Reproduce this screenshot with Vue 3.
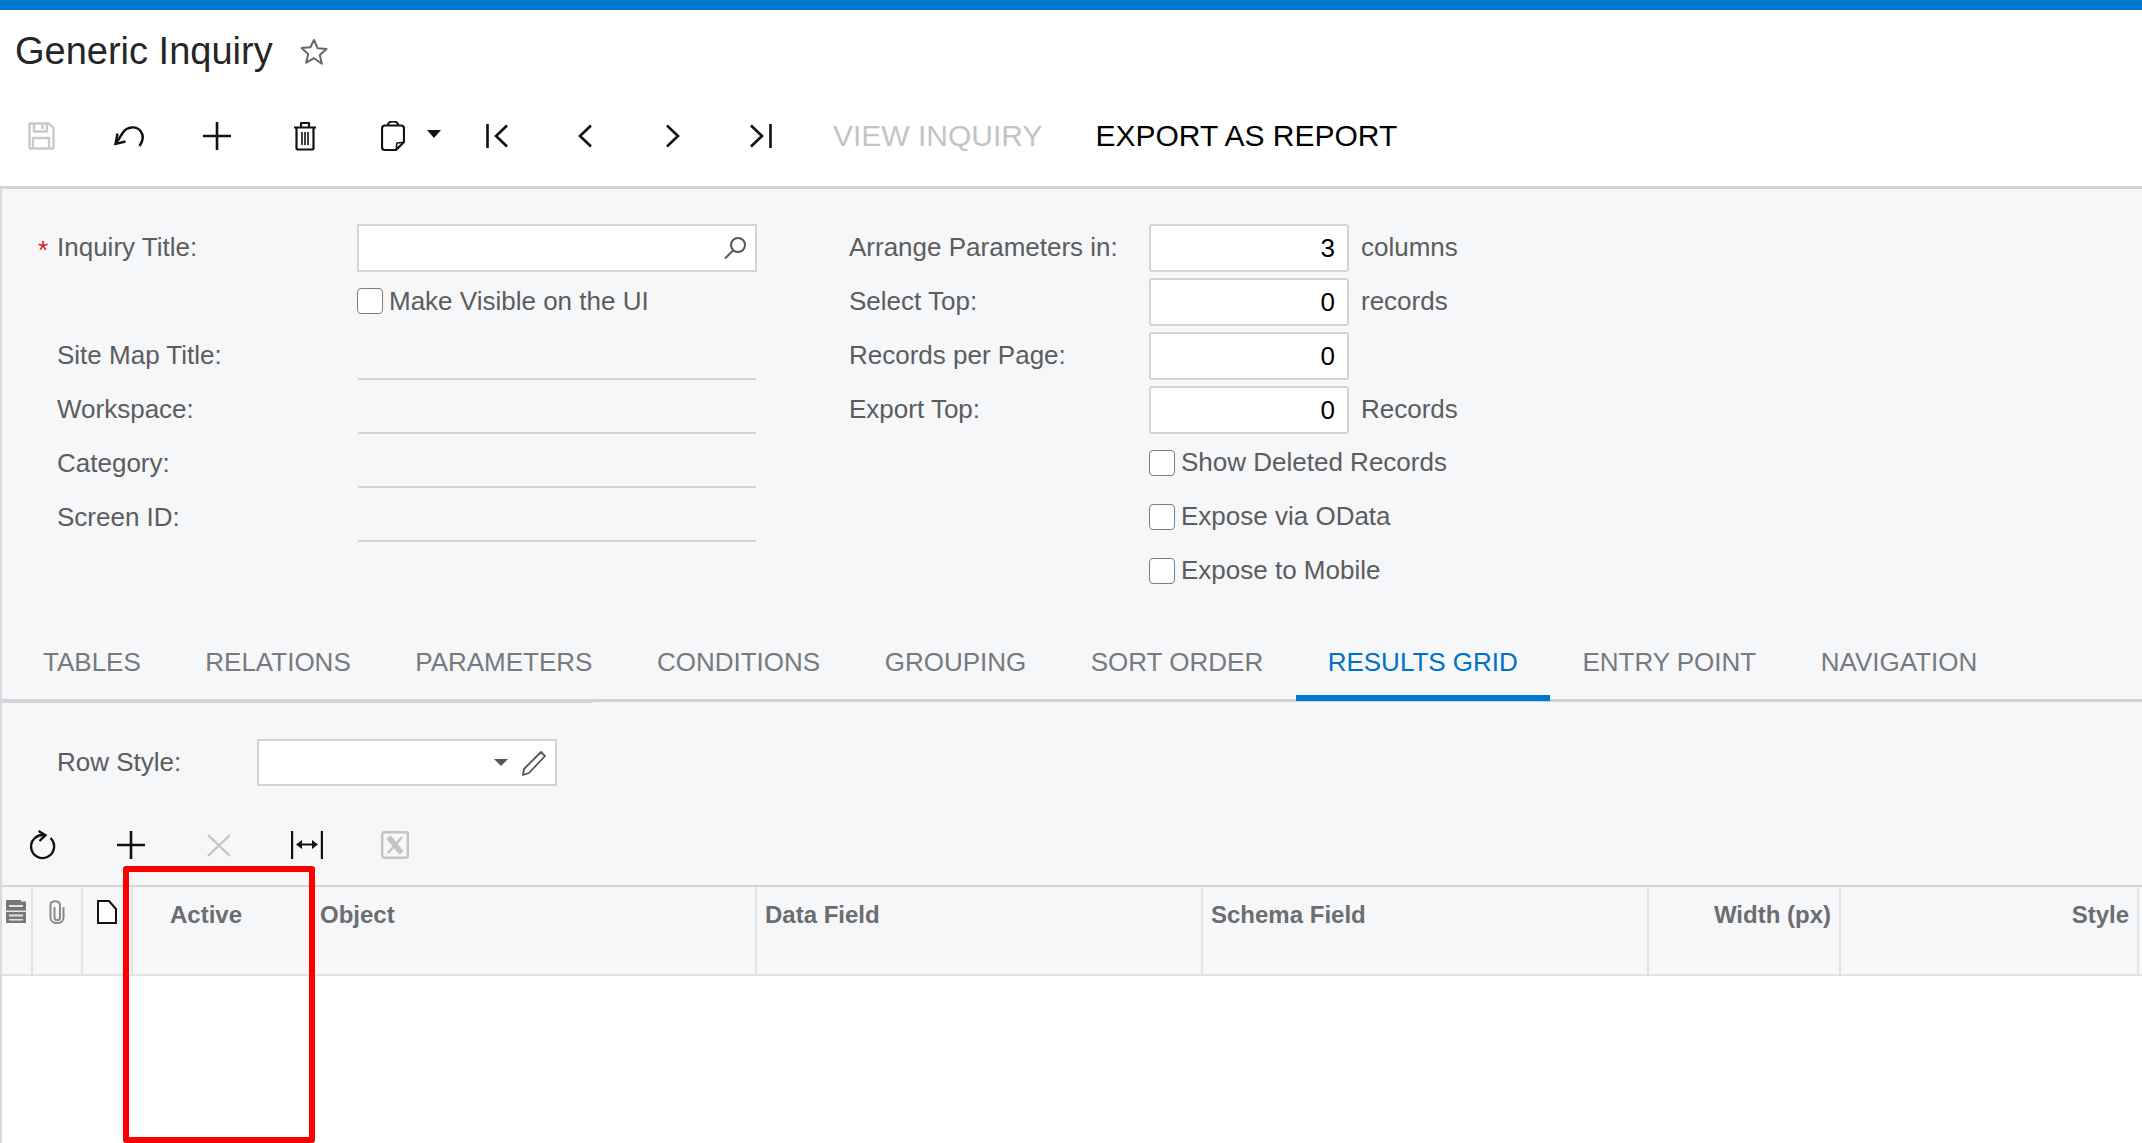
<script setup>
const tabs = ['TABLES','RELATIONS','PARAMETERS','CONDITIONS','GROUPING','SORT ORDER','RESULTS GRID','ENTRY POINT','NAVIGATION']
const lined = ['Site Map Title:','Workspace:','Category:','Screen ID:']
const numbers = [
  { label: 'Arrange Parameters in:', value: 3, suffix: 'columns' },
  { label: 'Select Top:', value: 0, suffix: 'records' },
  { label: 'Records per Page:', value: 0, suffix: '' },
  { label: 'Export Top:', value: 0, suffix: 'Records' }
]
const checks = ['Show Deleted Records','Expose via OData','Expose to Mobile']
</script>

<template>
  <div class="page">
    <div class="topbar"></div>
    <header class="titlerow">
      <h1>Generic Inquiry</h1>
      <svg class="star" width="28" height="27" viewBox="0 0 28 27" fill="none" stroke="#666" stroke-width="2" stroke-linejoin="round"><path d="M14 2l3.600 8.200 8.900.9-6.700 5.900 2 8.700L14 20.200l-7.800 4.500 2-8.700-6.700-5.900 8.900-.9z"/></svg>
    </header>
    <nav class="toolbar main">
      <span class="slot"><svg width="28" height="28" viewBox="0 0 28 28" fill="none" stroke="#c9c9c9" stroke-width="2.4" stroke-linejoin="round"><path d="M3 1.500h19l4.500 4.500v19.500a1 1 0 0 1-1 1h-22a1 1 0 0 1-1-1v-23a1 1 0 0 1 1-1z"/><path d="M7 1.500v8h13v-8M15.500 3v4"/><path d="M6 26.500V16h16v10.500"/></svg></span>
      <span class="slot"><svg width="30" height="22" viewBox="0 0 30 22" fill="none" stroke="#111" stroke-width="2.4"><path d="M1.500 19L9 7.500C13 1.500 22 0.500 26.500 6c3.500 4.500 2.500 10-1 15"/><path d="M3.500 8.500L1.500 19l10-2.500"/></svg></span>
      <span class="slot"><svg width="28" height="28" viewBox="0 0 28 28" stroke="#111" stroke-width="2.6"><path d="M14 0v28M0 14h28"/></svg></span>
      <span class="slot"><svg width="24" height="30" viewBox="0 0 24 30" fill="none" stroke="#111" stroke-width="2.2" stroke-linejoin="round"><path d="M1 6.500h22M8 6V2h8v4"/><path d="M3.500 7v20.500a1 1 0 0 0 1 1h15a1 1 0 0 0 1-1V7"/><path d="M9 11v13M12 11v13M15 11v13" stroke-width="1.6"/></svg></span>
      <span class="slot wide">
        <svg width="24" height="30" viewBox="0 0 24 30" fill="none" stroke="#111" stroke-width="2.2" stroke-linejoin="round"><path d="M7 4.500V4a5 3.500 0 0 1 10 0v.5"/><path d="M4 4.500h16a3 3 0 0 1 3 3V21l-8 8H4a3 3 0 0 1-3-3V7.500a3 3 0 0 1 3-3z"/><path d="M23 21c-2 1-6 .5-7 1-.8 1.500 0 5-1 7" stroke-width="1.6"/></svg>
        <i class="caret dark"></i>
      </span>
      <span class="slot"><svg width="22" height="24" viewBox="0 0 22 24" fill="none" stroke="#111" stroke-width="2.6"><path d="M1.500 0v24M21 1.500L10 12l11 10.500"/></svg></span>
      <span class="slot"><svg width="15" height="24" viewBox="0 0 15 24" fill="none" stroke="#111" stroke-width="2.6"><path d="M13 1.500L2 12l11 10.500"/></svg></span>
      <span class="slot"><svg width="15" height="24" viewBox="0 0 15 24" fill="none" stroke="#111" stroke-width="2.6"><path d="M1 1.500L12 12 1 22.500"/></svg></span>
      <span class="slot"><svg width="22" height="24" viewBox="0 0 22 24" fill="none" stroke="#111" stroke-width="2.6"><path d="M20.500 0v24M1 1.500L12 12 1 22.500"/></svg></span>
      <span class="textbtn disabled">VIEW INQUIRY</span>
      <span class="textbtn">EXPORT AS REPORT</span>
    </nav>

    <main class="content">
      <section class="form">
        <div class="col">
          <div class="row">
            <label class="lbl"><b class="req">*</b>Inquiry Title:</label>
            <div class="box left">
              <svg width="24" height="22" viewBox="0 0 24 22" fill="none" stroke="#555" stroke-width="2"><circle cx="15" cy="8" r="7"/><path d="M10 13.500L2 21.500"/></svg>
            </div>
          </div>
          <div class="row">
            <span class="lbl"></span>
            <span class="check"><i class="cb"></i>Make Visible on the UI</span>
          </div>
          <div v-for="name in lined" :key="name" class="row">
            <label class="lbl">{{ name }}</label>
            <div class="line"></div>
          </div>
        </div>
        <div class="col right">
          <div v-for="n in numbers" :key="n.label" class="row">
            <label class="lbl">{{ n.label }}</label>
            <div class="box num">{{ n.value }}</div>
            <span class="suffix">{{ n.suffix }}</span>
          </div>
          <div v-for="c in checks" :key="c" class="row">
            <span class="lbl"></span>
            <span class="check low"><i class="cb"></i>{{ c }}</span>
          </div>
        </div>
      </section>

      <div class="tabs">
        <span v-for="t in tabs" :key="t" class="tab" :class="{ active: t === 'RESULTS GRID' }">{{ t }}</span>
      </div>

      <section class="rowstyle">
        <label>Row Style:</label>
        <div class="select">
          <i class="caret grey"></i>
          <svg width="26" height="26" viewBox="0 0 26 26" fill="none" stroke="#555" stroke-width="1.8" stroke-linejoin="round"><path d="M20 2l4 4L8 23l-6 2 1-6z"/></svg>
        </div>
      </section>

      <nav class="toolbar sub">
        <span class="slot"><svg width="26" height="30" viewBox="0 0 26 30" fill="none" stroke="#111" stroke-width="2.4"><path d="M20.500 8.200A11.500 11.500 0 1 1 15 5.300"/><path d="M8.500 1l7 4.200-6 5.800"/></svg></span>
        <span class="slot"><svg width="28" height="28" viewBox="0 0 28 28" stroke="#111" stroke-width="2.6"><path d="M14 0v28M0 14h28"/></svg></span>
        <span class="slot"><svg width="24" height="23" viewBox="0 0 24 23" stroke="#c4c4c4" stroke-width="2.4"><path d="M1 1l22 21M23 1L1 22"/></svg></span>
        <span class="slot"><svg width="32" height="28" viewBox="0 0 32 28" fill="#111" stroke="#111"><path d="M1 0v28M31 0v28" stroke-width="2.4"/><path d="M8 13.500h16" stroke-width="2"/><path d="M5 13.500l6-4.500v9zM27 13.500l-6-4.500v9z" stroke="none"/></svg></span>
        <span class="slot"><svg width="28" height="28" viewBox="0 0 28 28" fill="none" stroke="#c4c4c4"><rect x="1.200" y="1.200" width="25.600" height="25.600" rx="2" stroke-width="2.400"/><path d="M7.500 6l13 16" stroke-width="5.500"/><path d="M21 6L7 22" stroke-width="2.500"/></svg></span>
      </nav>

      <section class="grid">
        <div class="ghead">
          <div class="gc icon">
            <svg width="20" height="23" viewBox="0 0 20 23" fill="#777"><path d="M0 0h15v1.500h5V23H0z"/><path d="M3 5h14v2H3zM0 10.500h20v1.500H0zM3 14.500h14v2H3zM3 19h14v1.500H3z" fill="#e4e5e7"/></svg>
          </div>
          <div class="gc icon">
            <svg width="16" height="24" viewBox="0 0 16 24" fill="none" stroke="#8a8a8a" stroke-width="2"><path d="M5.500 7v10.500c0 3.500 5.500 3.500 5.500 0V5c0-5-9.500-5-9.500 0v12.500c0 7.500 13 7.500 13 0V7"/></svg>
          </div>
          <div class="gc icon">
            <svg width="20" height="24" viewBox="0 0 20 24" fill="#fff" stroke="#111" stroke-width="2"><path d="M1 1h11l7 8v14H1z"/></svg>
          </div>
          <div class="gc active-col">Active</div>
          <div class="gc obj">Object</div>
          <div class="gc">Data Field</div>
          <div class="gc">Schema Field</div>
          <div class="gc end">Width (px)</div>
          <div class="gc end">Style</div>
        </div>
        <div class="gbody"></div>
      </section>

      <div class="highlight"></div>
    </main>
  </div>
</template>

<style>
html, body { margin: 0; overflow: hidden; background: #fff; }
</style>

<style scoped>
.page {
  height: 1143px;
  display: flex;
  flex-direction: column;
  font-family: "Liberation Sans", Arial, sans-serif;
  font-size: 26px;
  color: #5b5d60;
  background: #fff;
  overflow: hidden;
}
.topbar { height: 10px; background: #0078cd; flex: none; }
.titlerow {
  height: 80px;
  flex: none;
  display: flex;
  align-items: center;
  padding-left: 15px;
  gap: 27px;
}
h1 { margin: 2px 0 0; font-size: 38px; font-weight: 400; color: #262626; }
.star { margin-top: 2px; }
.toolbar { display: flex; align-items: center; gap: 24px; flex: none; }
.main { height: 96px; padding: 0 0 4px 9px; box-sizing: border-box; }
.slot { width: 64px; display: flex; justify-content: center; align-items: center; }
.slot.wide { width: 80px; justify-content: flex-start; padding-left: 20px; box-sizing: border-box; gap: 22px; }
.textbtn { padding: 0 15px; font-size: 30px; color: #000; white-space: nowrap; }
.textbtn.disabled { color: #c4c4c4; margin: 0 -1px 0 1px; }
.caret { display: block; width: 0; height: 0; border-left: 7px solid transparent; border-right: 7px solid transparent; }
.caret.dark { border-top: 8px solid #111; margin-top: -4px; }
.caret.grey { border-top: 7px solid #555; }

.content { position: relative; flex: 1; display: flex; flex-direction: column; background: #f5f7f9; border-top: 3px solid #d2d4d8; }
.content::before { content: ""; position: absolute; left: 0; top: 0; bottom: 0; width: 2px; background: #d8dade; z-index: 1; }

.form { display: flex; padding: 35px 0 0 57px; gap: 92px; height: 431px; box-sizing: border-box; flex: none; }
.col { display: flex; flex-direction: column; gap: 6px; }
.row { display: flex; align-items: center; height: 48px; flex: none; }
.lbl { width: 300px; flex: none; position: relative; white-space: nowrap; padding-bottom: 2px; }
.req { position: absolute; left: -19px; top: 3px; color: #e0121c; font-weight: 400; }
.box { height: 48px; box-sizing: border-box; background: #fff; border: 2.5px solid #d2d4d8; display: flex; align-items: center; }
.box.left { width: 400px; justify-content: flex-end; padding-right: 8px; }
.box.num { width: 200px; justify-content: flex-end; padding-right: 12px; color: #000; border-radius: 3px; }
.suffix { margin-left: 12px; white-space: nowrap; padding-bottom: 2px; }
.line { width: 398px; height: 48px; box-sizing: border-box; border-bottom: 2px solid #d2d4d8; margin-left: 1px; }
.check { display: flex; align-items: center; gap: 6px; white-space: nowrap; padding-bottom: 2px; }
.check.low { padding-bottom: 3px; }
.cb { display: block; width: 26px; height: 26px; box-sizing: border-box; background: #fff; border: 1.5px solid #7b7d80; border-radius: 4px; }

.tabs { position: relative; height: 82px; flex: none; box-sizing: border-box; display: flex; gap: 0.5px; padding-left: 11px; border-bottom: 3px solid #d2d4d8; }
.tabs::before { content: ""; position: absolute; left: 0; bottom: -4px; width: 593px; height: 2px; background: #d2d4d8; }
.tab { position: relative; padding: 5px 32px 0; display: flex; align-items: center; box-sizing: border-box; height: 79px; font-size: 26px; color: #777a7e; white-space: nowrap; }
.tab.active { color: #0071c5; }
.tab.active::after { content: ""; position: absolute; left: 0; right: 0; bottom: -2px; height: 6px; background: #0078cd; }

.rowstyle { display: flex; align-items: center; padding: 37px 0 0 57px; flex: none; }
.rowstyle label { width: 200px; }
.select { width: 300px; height: 47px; box-sizing: border-box; background: #fff; border: 2.5px solid #d2d4d8; display: flex; align-items: center; justify-content: flex-end; gap: 13px; padding-right: 8px; }

.sub { height: 99px; padding: 19px 0 0 11px; box-sizing: border-box; }

.grid { flex: 1; display: flex; flex-direction: column; min-height: 0; }
.ghead { display: grid; grid-template-columns: 33px 50px 50px 180px 444px 446px 446px 192px 298px 1fr; height: 87px; border-top: 2px solid #d2d4d8; border-bottom: 2px solid #e0e2e5; flex: none; }
.gc { border-right: 2.5px solid #e0e2e5; box-sizing: border-box; padding: 14px 8px 0 8px; font-weight: 700; font-size: 24px; color: #6b6d70; white-space: nowrap; }
.gc.icon { display: flex; justify-content: center; align-items: flex-start; padding: 13px 0 0; }
.gc.active-col { padding-left: 37px; }
.gc.obj { padding-left: 7px; }
.gc.end { text-align: right; padding-right: 8px; }
.gbody { flex: 1; background: #fff; }

.highlight { position: absolute; left: 123px; top: 677px; width: 192px; height: 277px; box-sizing: border-box; border: 6px solid #fa0000; border-radius: 3px; z-index: 2; }
</style>
